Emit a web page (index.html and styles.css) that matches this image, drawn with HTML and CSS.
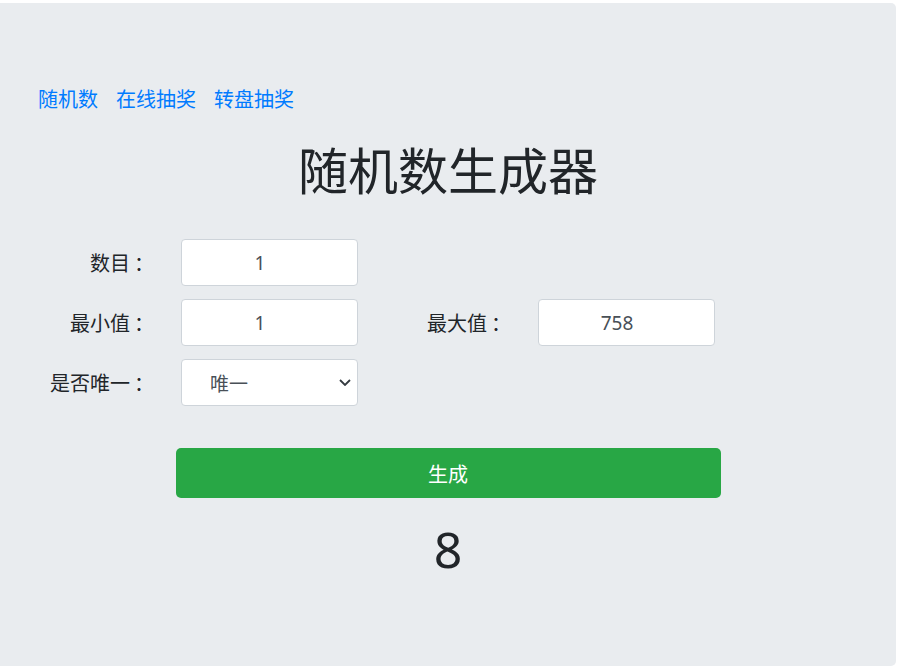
FILE: index.html
```html
<!DOCTYPE html>
<html lang="zh-CN">
<head>
<meta charset="utf-8">
<title>随机数生成器</title>
<link rel="stylesheet" href="styles.css">
</head>
<body>
<div class="jumbotron">
  <nav class="links">
    <a href="#">随机数</a>
    <a href="#">在线抽奖</a>
    <a href="#">转盘抽奖</a>
  </nav>
  <h1 class="title">随机数生成器</h1>
  <form class="form">
    <label class="lbl" for="count">数目<span class="colon">：</span></label>
    <input class="field" id="count" type="number" value="1">
    <span></span><span></span>
    <label class="lbl" for="min">最小值<span class="colon">：</span></label>
    <input class="field" id="min" type="number" value="1">
    <label class="lbl" for="max">最大值<span class="colon">：</span></label>
    <input class="field" id="max" type="number" value="758">
    <label class="lbl" for="uniq">是否唯一<span class="colon">：</span></label>
    <select class="field select" id="uniq">
      <option>唯一</option>
      <option>不唯一</option>
    </select>
  </form>
  <button class="btn" type="button">生成</button>
  <div class="result">8</div>
</div>
</body>
</html>
```
FILE: styles.css
```css
html, body {
  margin: 0;
  padding: 0;
  background: #ffffff;
}
body {
  padding-top: 3px;
  font-family: "Noto Sans", "Noto Sans CJK SC", sans-serif;
  color: #212529;
}
.jumbotron {
  box-sizing: border-box;
  width: 896px;
  height: 663px;
  background: #e9ecef;
  border-radius: 0 5px 5px 0;
  padding: 81px 38px 0 38px;
}
.links {
  display: flex;
  gap: 18px;
  font-size: 20px;
  line-height: 30px;
}
.links a {
  color: #007bff;
  text-decoration: none;
  font-family: "Noto Sans CJK SC", sans-serif;
}
.title {
  margin: 24px 0 0 0;
  text-align: center;
  font-family: "Noto Sans CJK SC", sans-serif;
  font-weight: 400;
  font-size: 50px;
  line-height: 61px;
}
.form {
  margin-top: 40px;
  display: grid;
  grid-template-columns: 112px 177px 118px 177px;
  grid-auto-rows: 47px;
  column-gap: 31px;
  row-gap: 13px;
}
.lbl {
  display: flex;
  align-items: center;
  justify-content: flex-end;
  font-family: "Noto Sans CJK SC", sans-serif;
  font-size: 20px;
  color: #212529;
}
.colon {
  padding-left: 4px;
  margin-right: -4px;
}
.field {
  box-sizing: border-box;
  width: 177px;
  height: 47px;
  border: 1px solid #ced4da;
  border-radius: 4px;
  background: #ffffff;
  font-family: "Noto Sans", "Noto Sans CJK SC", sans-serif;
  font-size: 19px;
  color: #495057;
  text-align: center;
  padding: 0 16px 0 12px;
  outline: none;
}
.select {
  appearance: none;
  -webkit-appearance: none;
  text-align: left;
  padding-left: 28px;
  font-family: "Noto Sans CJK SC", sans-serif;
  font-size: 19px;
  background: #ffffff url("data:image/svg+xml;utf8,<svg xmlns='http://www.w3.org/2000/svg' width='12' height='7' viewBox='0 0 12 7'><path d='M1 1l5 5 5-5' fill='none' stroke='%23343a40' stroke-width='1.8'/></svg>") no-repeat right 6px center;
}
.btn {
  display: block;
  box-sizing: border-box;
  width: 545px;
  height: 50px;
  margin: 42px auto 0 auto;
  border: none;
  border-radius: 5px;
  background: #28a745;
  color: #ffffff;
  font-family: "Noto Sans CJK SC", sans-serif;
  font-size: 20px;
}
.result {
  margin-top: 16px;
  text-align: center;
  font-size: 50px;
  line-height: 70px;
  color: #212529;
}
```
